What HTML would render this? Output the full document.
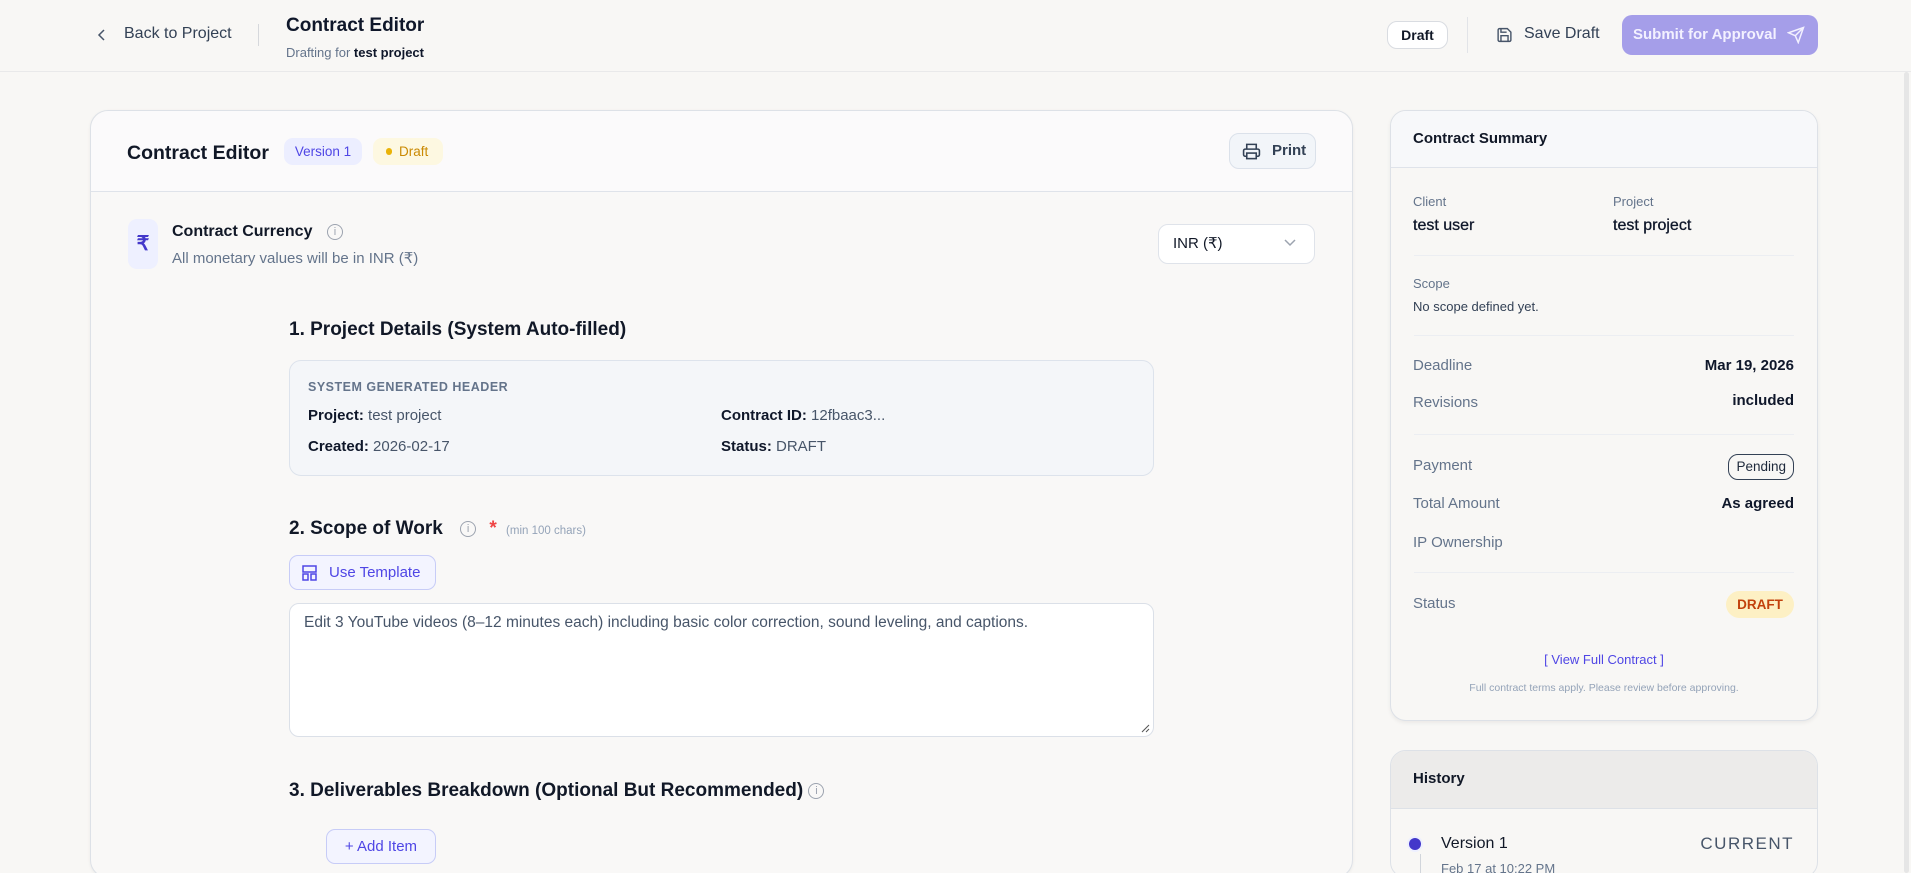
<!DOCTYPE html>
<html><head><meta charset="utf-8"><style>
*{box-sizing:border-box;margin:0;padding:0}
html,body{width:1911px;height:873px;overflow:hidden}
body{background:#f8f7f5;font-family:"Liberation Sans",sans-serif;color:#111827;position:relative}
#w{position:absolute;left:0;top:0;width:1911px;height:873px;overflow:hidden}
.a{position:absolute;white-space:nowrap}
.b{font-weight:bold}
.lbl{color:#64748b;font-size:15px}
.val{color:#0f172a;font-size:16px;font-weight:bold}
.sep{position:absolute;height:1px;background:#eceef2;left:23px;right:23px}
.info{display:inline-block;width:16px;height:16px;border:1.3px solid #9ca3af;border-radius:50%;color:#9ca3af;font-size:11px;text-align:center;line-height:14px;font-weight:normal;vertical-align:middle}
</style></head><body><div id="w">
<div class="a" style="left:0;top:71px;width:1911px;height:1px;background:#e9e9ea"></div>
<svg class="a" style="left:96px;top:28px" width="12" height="14" viewBox="0 0 12 14"><path d="M8 2 L3 7 L8 12" fill="none" stroke="#475569" stroke-width="1.5"/></svg>
<div class="a" style="left:124px;top:25px;font-size:16px;color:#334155">Back to Project</div>
<div class="a" style="left:258px;top:24px;width:1px;height:22px;background:#d6d8dc"></div>
<div class="a b" style="left:286px;top:15px;font-size:19px;color:#0f172a">Contract Editor</div>
<div class="a" style="left:286px;top:45px;font-size:13px;color:#64748b">Drafting for <b style="color:#0f172a">test project</b></div>
<div class="a" style="left:1387px;top:21px;width:61px;height:28px;border:1px solid #d9dce1;border-radius:10px;background:#fff;font-size:14px;font-weight:bold;text-align:center;line-height:26px">Draft</div>
<div class="a" style="left:1467px;top:17px;width:1px;height:36px;background:#e2e4e8"></div>
<svg class="a" style="left:1496px;top:26px" width="17" height="18" viewBox="0 0 24 24" fill="none" stroke="#475569" stroke-width="2"><path d="M19 21H5a2 2 0 0 1-2-2V5a2 2 0 0 1 2-2h11l5 5v11a2 2 0 0 1-2 2z"/><path d="M17 21v-8H7v8M7 3v5h8"/></svg>
<div class="a" style="left:1524px;top:25px;font-size:16px;color:#334155">Save Draft</div>
<div class="a" style="left:1622px;top:15px;width:196px;height:40px;border-radius:10px;background:#a59ee9;color:#f3f1ff;font-size:15px;font-weight:bold;line-height:40px;padding-left:11px">Submit for Approval
<svg style="position:absolute;right:13px;top:11px" width="18" height="18" viewBox="0 0 24 24" fill="none" stroke="#f3f1ff" stroke-width="2"><path d="M22 2 11 13M22 2l-7 20-4-9-9-4 20-7z"/></svg></div>
<div class="a" style="left:1904px;top:72px;width:5px;height:801px;background:#e6e6e6;border-radius:3px"></div>

<div class="a" style="left:90px;top:110px;width:1263px;height:768px;background:#f9f8f7;border:1.5px solid #dde1e7;border-radius:18px;box-shadow:0 1px 3px rgba(0,0,0,.06)">
 <div style="position:absolute;left:0;top:0;right:0;height:81px;background:#fbfafb;border-bottom:1px solid #dfe3ea;border-radius:18px 18px 0 0"></div>
 <div class="a b" style="left:36px;top:31px;font-size:19.5px">Contract Editor</div>
 <div class="a" style="left:193px;top:27px;width:78px;height:27px;border-radius:9px;background:#eceeff;color:#4f46e5;font-size:13.5px;text-align:center;line-height:27px">Version 1</div>
 <div class="a" style="left:282px;top:27px;width:70px;height:27px;border-radius:9px;background:#fdf8e1;color:#ca8a04;font-size:13.5px;line-height:27px;padding-left:26px"><span style="position:absolute;left:13px;top:10px;width:6px;height:7px;border-radius:3px;background:#eab308"></span>Draft</div>
 <div class="a" style="left:1138px;top:22px;width:87px;height:36px;border:1px solid #dbe1ea;border-radius:10px;background:#f2f5f9;font-size:15px;font-weight:bold;color:#334155;line-height:34px;padding-left:42px">Print
 <svg style="position:absolute;left:12px;top:8px" width="19" height="19" viewBox="0 0 24 24" fill="none" stroke="#334155" stroke-width="2"><path d="M6 9V3h12v6M6 18H4a2 2 0 0 1-2-2v-5a2 2 0 0 1 2-2h16a2 2 0 0 1 2 2v5a2 2 0 0 1-2 2h-2"/><rect x="6" y="14" width="12" height="7"/></svg></div>

 <div class="a" style="left:37px;top:108px;width:30px;height:50px;border-radius:9px;background:#eef0ff;color:#4338ca;font-size:20px;font-weight:bold;text-align:center;line-height:50px">₹</div>
 <div class="a b" style="left:81px;top:112px;font-size:16px">Contract Currency <span class="info" style="margin-left:10px">i</span></div>
 <div class="a" style="left:81px;top:138px;font-size:15px;color:#64748b">All monetary values will be in INR (₹)</div>
 <div class="a" style="left:1067px;top:113px;width:157px;height:40px;border:1px solid #dfe3ea;border-radius:10px;background:#fff;font-size:15px;line-height:38px;padding-left:14px">INR (₹)
 <svg style="position:absolute;right:18px;top:14px" width="12" height="8" viewBox="0 0 12 8"><path d="M1 1l5 5 5-5" fill="none" stroke="#9ca3af" stroke-width="1.5"/></svg></div>

 <div class="a b" style="left:198px;top:208px;font-size:19px">1. Project Details (System Auto-filled)</div>
 <div class="a" style="left:198px;top:249px;width:865px;height:116px;border:1px solid #dde3ec;border-radius:12px;background:#f4f6f9">
  <div class="a b" style="left:18px;top:19px;font-size:12.5px;color:#64748b;letter-spacing:.5px">SYSTEM GENERATED HEADER</div>
  <div class="a" style="left:18px;top:46px;font-size:15px;color:#475569"><b style="color:#0f172a">Project:</b> test project</div>
  <div class="a" style="left:18px;top:77px;font-size:15px;color:#475569"><b style="color:#0f172a">Created:</b> 2026-02-17</div>
  <div class="a" style="left:431px;top:46px;font-size:15px;color:#475569"><b style="color:#0f172a">Contract ID:</b> 12fbaac3...</div>
  <div class="a" style="left:431px;top:77px;font-size:15px;color:#475569"><b style="color:#0f172a">Status:</b> DRAFT</div>
 </div>

 <div class="a b" style="left:198px;top:407px;font-size:19px">2. Scope of Work <span class="info" style="margin-left:12px">i</span> <span style="color:#ef4444;margin-left:8px">*</span> <span style="font-size:11.5px;color:#94a3b8;font-weight:normal;margin-left:4px">(min 100 chars)</span></div>
 <div class="a" style="left:198px;top:444px;width:147px;height:35px;border:1px solid #c7ccf7;border-radius:9px;background:#f3f4ff;color:#4f46e5;font-size:15px;line-height:33px;padding-left:39px">Use Template
 <svg style="position:absolute;left:12px;top:9px" width="15" height="16" viewBox="0 0 15 16" fill="none" stroke="#4f46e5" stroke-width="1.5"><rect x="1" y="1" width="13" height="6"/><rect x="1" y="9" width="5" height="6"/><rect x="9" y="9" width="5" height="6"/></svg></div>
 <div class="a" style="left:198px;top:492px;width:865px;height:134px;border:1px solid #dbe0e8;border-radius:10px;background:#fff">
  <div class="a" style="left:14px;top:10px;font-size:15.5px;color:#475569">Edit 3 YouTube videos (8–12 minutes each) including basic color correction, sound leveling, and captions.</div>
  <svg style="position:absolute;right:3px;bottom:3px" width="9" height="9" viewBox="0 0 9 9"><path d="M1 8 8 1M5 8 8 5" stroke="#555" stroke-width="1"/></svg>
 </div>
 <div class="a b" style="left:198px;top:669px;font-size:19px">3. Deliverables Breakdown (Optional But Recommended) <span class="info">i</span></div>
 <div class="a" style="left:235px;top:718px;width:110px;height:35px;border:1px solid #c7ccf7;border-radius:9px;background:#f3f4ff;color:#4f46e5;font-size:15px;text-align:center;line-height:33px">+ Add Item</div>
</div>

<div class="a" style="left:1390px;top:110px;width:428px;height:611px;background:#f8f7f5;border:1.5px solid #dde1e7;border-radius:16px;box-shadow:0 2px 4px rgba(0,0,0,.06);overflow:hidden">
 <div style="position:absolute;left:0;top:0;right:0;height:57px;background:#f7f8fa;border-bottom:1px solid #dfe3ea"></div>
 <div class="a b" style="left:22px;top:19px;font-size:15px">Contract Summary</div>
 <div class="a" style="left:22px;top:83px;font-size:13px;color:#64748b">Client</div>
 <div class="a" style="left:22px;top:106px" ><span class="val" style="font-size:16px;font-weight:normal;-webkit-text-stroke:.3px #0f172a">test user</span></div>
 <div class="a" style="left:222px;top:83px;font-size:13px;color:#64748b">Project</div>
 <div class="a" style="left:222px;top:106px"><span class="val" style="font-weight:normal;-webkit-text-stroke:.3px #0f172a">test project</span></div>
 <div class="sep" style="top:144px"></div>
 <div class="a" style="left:22px;top:165px;font-size:13px;color:#64748b">Scope</div>
 <div class="a" style="left:22px;top:188px;font-size:13px;color:#334155">No scope defined yet.</div>
 <div class="sep" style="top:224px"></div>
 <div class="a lbl" style="left:22px;top:246px">Deadline</div>
 <div class="a val" style="right:23px;top:246px;font-size:15px">Mar 19, 2026</div>
 <div class="a lbl" style="left:22px;top:283px">Revisions</div>
 <div class="a val" style="right:23px;top:281px;font-size:15px">included</div>
 <div class="sep" style="top:323px"></div>
 <div class="a lbl" style="left:22px;top:346px">Payment</div>
 <div class="a" style="right:23px;top:343px;height:26px;border:1.5px solid #334155;border-radius:10px;padding:0 7px;font-size:13.5px;line-height:23px;color:#1e293b">Pending</div>
 <div class="a lbl" style="left:22px;top:384px">Total Amount</div>
 <div class="a val" style="right:23px;top:384px;font-size:15px">As agreed</div>
 <div class="a lbl" style="left:22px;top:423px">IP Ownership</div>
 <div class="sep" style="top:461px"></div>
 <div class="a lbl" style="left:22px;top:484px">Status</div>
 <div class="a" style="right:23px;top:480px;width:68px;height:27px;border-radius:14px;background:#fdf0c4;color:#c2410c;font-size:13.5px;font-weight:bold;text-align:center;line-height:27px">DRAFT</div>
 <div class="a" style="left:0;right:0;top:541px;text-align:center;font-size:13px;color:#4f46e5">[ View Full Contract ]</div>
 <div class="a" style="left:0;right:0;top:571px;text-align:center;font-size:10.5px;color:#94a3b8">Full contract terms apply. Please review before approving.</div>
</div>

<div class="a" style="left:1390px;top:750px;width:428px;height:128px;background:#f8f7f5;border:1.5px solid #dde1e7;border-radius:16px;overflow:hidden">
 <div style="position:absolute;left:0;top:0;right:0;height:58px;background:#ecebea;border-bottom:1px solid #dde1e7"></div>
 <div class="a b" style="left:22px;top:19px;font-size:15px">History</div>
 <div class="a" style="left:29px;top:103px;width:1px;height:40px;background:#d1d5db"></div>
 <div class="a" style="left:18px;top:87px;width:12px;height:12px;border-radius:50%;background:#4338ca;box-shadow:0 0 0 2px #eef0ff"></div>
 <div class="a" style="left:50px;top:84px;font-size:16px;color:#111827">Version 1</div>
 <div class="a" style="right:23px;top:83px;font-size:17px;color:#475569;letter-spacing:1.5px">CURRENT</div>
 <div class="a" style="left:50px;top:110px;font-size:13px;color:#64748b">Feb 17 at 10:22 PM</div>
</div>
</div></body></html>
